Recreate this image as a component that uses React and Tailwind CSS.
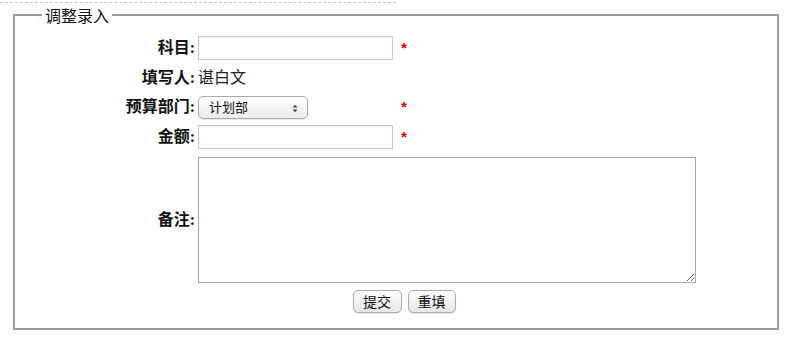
import React from "react";

const serif = { fontFamily: '"Liberation Serif", "Noto Sans CJK SC", serif' };
const sans = { fontFamily: '"Liberation Sans", "Noto Sans CJK SC", sans-serif' };

function Label({ children }) {
  return (
    <div className="pr-[3px] text-right text-[16px] font-bold leading-none text-[#111]" style={serif}>
      {children}
    </div>
  );
}

function Star() {
  return (
    <span className="pl-[2px] text-[15px] font-bold leading-none text-[#e00000]" style={sans}>
      *
    </span>
  );
}

function Row({ label, children, star, className = "" }) {
  return (
    <div className={`grid grid-cols-[86px_201px_297px] items-center ${className}`}>
      <Label>{label}</Label>
      <div className="flex items-center">{children}</div>
      <div>{star && <Star />}</div>
    </div>
  );
}

export default function App() {
  return (
    <div className="h-[357px] w-[800px] bg-white" style={sans}>
      <div className="mt-[2px] w-[396px] border-t border-dashed border-[#c8c8c8]" />
      <fieldset className="ml-[13px] w-[766px] border-2 border-[#9c9c9c] px-0 pb-[15px] pt-[9px]">
        <legend className="ml-[27px] px-[3px] pt-[4px] text-[16px] leading-[20px] text-[#111]" style={serif}>
          调整录入
        </legend>
        <div className="ml-[97px] w-[584px]">
          <Row label="科目:" star className="h-[24px]">
            <input className="h-[24px] w-[195px] border border-[#c9c9c9] bg-white shadow-[inset_0_1px_1px_rgba(0,0,0,0.08)] outline-none" />
          </Row>
          <Row label="填写人:" className="mt-[6px] h-[24px]">
            <span className="whitespace-nowrap text-[16px] leading-none text-[#222]" style={sans}>
              谌白文
            </span>
          </Row>
          <Row label="预算部门:" star className="mt-[5px] h-[24px]">
            <div className="relative flex h-[23px] w-[110px] items-center rounded-[5px] border border-[#a9a9a9] bg-gradient-to-b from-white to-[#ececec] pl-[10px] shadow-[0_1px_1px_rgba(0,0,0,0.08)]">
              <span className="text-[13px] leading-none text-[#111]">计划部</span>
              <svg className="absolute right-[9px] top-[7px]" width="6" height="9" viewBox="0 0 6 9">
                <path d="M0.5 3.5 L3 0.8 L5.5 3.5 Z" fill="#444" />
                <path d="M0.5 5.5 L3 8.2 L5.5 5.5 Z" fill="#444" />
              </svg>
            </div>
          </Row>
          <Row label="金额:" star className="mt-[6px] h-[24px]">
            <input className="h-[24px] w-[195px] border border-[#c9c9c9] bg-white shadow-[inset_0_1px_1px_rgba(0,0,0,0.08)] outline-none" />
          </Row>
          <div className="mt-[8px] grid grid-cols-[86px_498px] items-center">
            <Label>备注:</Label>
            <textarea className="block h-[126px] w-[498px] border border-[#a6a6a6] bg-white outline-none" />
          </div>
          <div className="mt-[7px] flex justify-center gap-[6px]">
            <button className="h-[23px] w-[49px] rounded-[5px] border border-[#ababab] bg-gradient-to-b from-white to-[#e6e6e6] text-[14px] leading-none text-[#111] shadow-[0_1px_1px_rgba(0,0,0,0.08)]">
              提交
            </button>
            <button className="h-[23px] w-[48px] rounded-[5px] border border-[#ababab] bg-gradient-to-b from-white to-[#e6e6e6] text-[14px] leading-none text-[#111] shadow-[0_1px_1px_rgba(0,0,0,0.08)]">
              重填
            </button>
          </div>
        </div>
      </fieldset>
    </div>
  );
}
